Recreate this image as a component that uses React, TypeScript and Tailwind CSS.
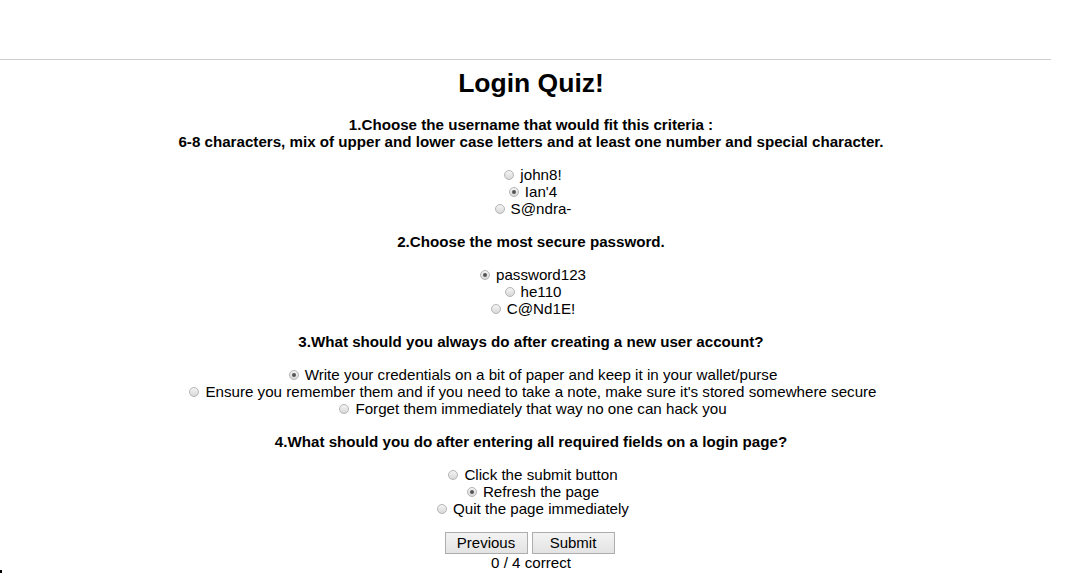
import React from "react";

type Question = {
  title: string[];
  options: string[];
  picked: number;
};

const questions: Question[] = [
  {
    title: [
      "1.Choose the username that would fit this criteria :",
      "6-8 characters, mix of upper and lower case letters and at least one number and special character.",
    ],
    options: ["john8!", "Ian'4", "S@ndra-"],
    picked: 1,
  },
  {
    title: ["2.Choose the most secure password."],
    options: ["password123", "he110", "C@Nd1E!"],
    picked: 0,
  },
  {
    title: ["3.What should you always do after creating a new user account?"],
    options: [
      "Write your credentials on a bit of paper and keep it in your wallet/purse",
      "Ensure you remember them and if you need to take a note, make sure it's stored somewhere secure",
      "Forget them immediately that way no one can hack you",
    ],
    picked: 0,
  },
  {
    title: ["4.What should you do after entering all required fields on a login page?"],
    options: ["Click the submit button", "Refresh the page", "Quit the page immediately"],
    picked: 1,
  },
];

const Radio = ({ on }: { on: boolean }) => (
  <span className="relative inline-block w-[10px] h-[10px] rounded-full border border-[#b4b4b4] bg-gradient-to-b from-[#f4f4f4] to-[#d9d9d9] ml-[4px] mr-[6px] shrink-0">
    {on && (
      <span className="absolute left-[2px] top-[2px] w-[4px] h-[4px] rounded-full bg-[#555]" />
    )}
  </span>
);

const Btn = ({ label }: { label: string }) => (
  <button className="w-[83px] h-[22px] border border-[#adadad] bg-gradient-to-b from-[#f3f3f3] to-[#e3e3e3] text-[15px] leading-[20px] text-black">
    {label}
  </button>
);

export default function App() {
  return (
    <div className="relative w-[1076px] h-[574px] overflow-hidden bg-white text-black font-['Liberation_Sans',Arial,sans-serif]">
      <div className="pt-[59px]">
        <div className="h-px w-[1051px] bg-[#cfcfcf]" />
      </div>
      <div className="w-[1062px] text-center text-[15.15px] leading-[17px]">
        <h1 className="mt-[8px] text-[26.5px] leading-[30px] font-bold">Login Quiz!</h1>
        <div className="mt-[18px] flex flex-col gap-[16px]">
          {questions.map((q, i) => (
            <div key={i} className="flex flex-col gap-[16px]">
              <div className="font-bold">
                {q.title.map((t) => (
                  <div key={t}>{t}</div>
                ))}
              </div>
              <div>
                {q.options.map((o, j) => (
                  <div key={o} className="flex justify-center items-center h-[17px]">
                    <Radio on={j === q.picked} />
                    <span>{o}</span>
                  </div>
                ))}
              </div>
            </div>
          ))}
          <div className="-mt-px">
            <div className="flex justify-center gap-[4px] pr-[3px]">
              <Btn label="Previous" />
              <Btn label="Submit" />
            </div>
            <div>0 / 4 correct</div>
          </div>
        </div>
      </div>
      <div className="absolute left-0 top-[570px] w-[2px] h-[3px] bg-black" />
    </div>
  );
}
